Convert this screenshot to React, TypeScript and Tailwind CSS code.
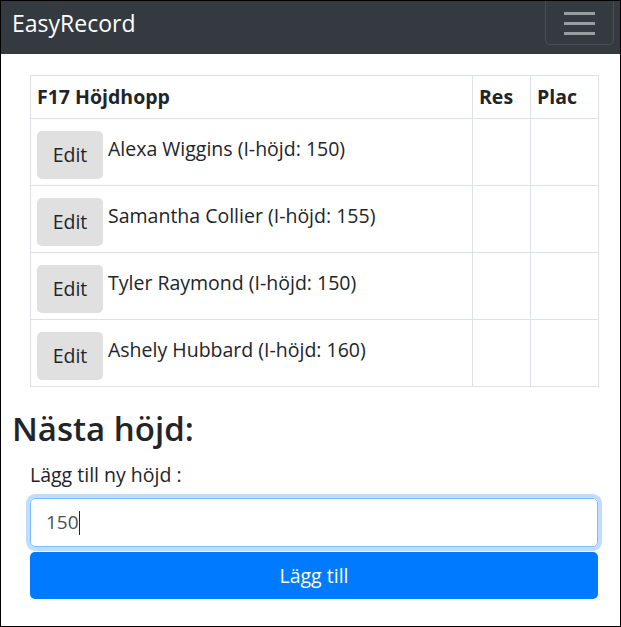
const athletes = [
  { name: "Alexa Wiggins", height: 150 },
  { name: "Samantha Collier", height: 155 },
  { name: "Tyler Raymond", height: 150 },
  { name: "Ashely Hubbard", height: 160 },
];

const font = { fontFamily: '"Open Sans", "Noto Sans", sans-serif' };

export default function App() {
  return (
    <div
      className="w-[621px] h-[627px] border border-black bg-white text-[#212529] overflow-hidden"
      style={font}
    >
      {/* Navbar */}
      <nav className="h-[53px] bg-[#343a40] flex items-start justify-between pl-[11px] pr-[6px]">
        <span className="text-white text-[23px] leading-[44px]">EasyRecord</span>
        <button className="mt-[-6px] w-[69px] h-[50px] border border-white/10 rounded-[5px] flex flex-col items-center justify-center gap-[7px] pt-[6px]">
          <span className="block w-[31px] h-[3px] bg-white/50" />
          <span className="block w-[31px] h-[3px] bg-white/50" />
          <span className="block w-[31px] h-[3px] bg-white/50" />
        </button>
      </nav>

      {/* Table */}
      <div className="pt-[21px] px-[29px]">
        <table className="w-[568px] border-collapse table-fixed">
          <colgroup>
            <col className="w-[442px]" />
            <col className="w-[58px]" />
            <col className="w-[68px]" />
          </colgroup>
          <thead>
            <tr className="h-[43px]">
              <th className="border border-[#dee2e6] text-left font-bold text-[19.5px] px-[6px]">F17 Höjdhopp</th>
              <th className="border border-[#dee2e6] text-left font-bold text-[19.5px] px-[6px]">Res</th>
              <th className="border border-[#dee2e6] text-left font-bold text-[19.5px] px-[6px]">Plac</th>
            </tr>
          </thead>
          <tbody>
            {athletes.map((a) => (
              <tr key={a.name} className="h-[67px]">
                <td className="border border-[#dee2e6] p-[6px] align-top">
                  <div className="flex items-start gap-[5px]">
                    <button className="mt-[6px] w-[66px] h-[48px] bg-[#e0e0e0] rounded-[5px] text-[19.5px] leading-[48px] text-[#212529]">
                      Edit
                    </button>
                    <span className="text-[19.5px] leading-[28px] mt-[10px]">
                      {a.name} (I-höjd: {a.height})
                    </span>
                  </div>
                </td>
                <td className="border border-[#dee2e6]" />
                <td className="border border-[#dee2e6]" />
              </tr>
            ))}
          </tbody>
        </table>
      </div>

      {/* Next height */}
      <h2 className="ml-[11px] mt-[20px] text-[33px] leading-[44px] font-semibold">Nästa höjd:</h2>
      <div className="pl-[29px] w-[597px]">
        <label className="block mt-[10px] text-[19.5px] leading-[27px]">Lägg till ny höjd :</label>
        <div className="mt-[10px] h-[49px] border border-[#80bdff] rounded-[5px] shadow-[0_0_0_4px_rgba(0,123,255,0.25)] flex items-center pl-[15px] text-[19px] text-[#495057]">
          <span>150</span>
          <span className="inline-block w-[1px] h-[24px] bg-[#212529]" />
        </div>
        <button className="mt-[5px] w-full h-[47px] bg-[#007bff] rounded-[5px] text-white text-[19.5px]">
          Lägg till
        </button>
      </div>
    </div>
  );
}
